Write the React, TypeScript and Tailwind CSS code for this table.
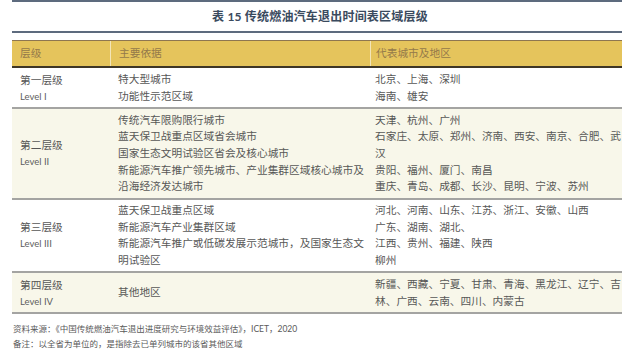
const rows = [
  {
    level: '第一层级',
    en: 'Level I',
    basis: ['特大型城市', '功能性示范区域'],
    cities: ['北京、上海、深圳', '海南、雄安'],
    bg: 'bg-white',
  },
  {
    level: '第二层级',
    en: 'Level II',
    basis: [
      '传统汽车限购限行城市',
      '蓝天保卫战重点区域省会城市',
      '国家生态文明试验区省会及核心城市',
      '新能源汽车推广领先城市、产业集群区域核心城市及',
      '沿海经济发达城市',
    ],
    cities: [
      '天津、杭州、广州',
      '石家庄、太原、郑州、济南、西安、南京、合肥、武',
      '汉',
      '贵阳、福州、厦门、南昌',
      '重庆、青岛、成都、长沙、昆明、宁波、苏州',
    ],
    bg: 'bg-[#f8f7ea]',
  },
  {
    level: '第三层级',
    en: 'Level III',
    basis: [
      '蓝天保卫战重点区域',
      '新能源汽车产业集群区域',
      '新能源汽车推广或低碳发展示范城市，及国家生态文',
      '明试验区',
    ],
    cities: ['河北、河南、山东、江苏、浙江、安徽、山西', '广东、湖南、湖北、', '江西、贵州、福建、陕西', '柳州'],
    bg: 'bg-white',
  },
  {
    level: '第四层级',
    en: 'Level IV',
    basis: ['其他地区'],
    cities: ['新疆、西藏、宁夏、甘肃、青海、黑龙江、辽宁、吉', '林、广西、云南、四川、内蒙古'],
    bg: 'bg-[#f8f7ea]',
  },
]

export default function App() {
  return (
    <main className="w-[624px] h-[355px] bg-white overflow-hidden pl-[12px] pr-[2px] font-['Noto_Sans_CJK_SC',sans-serif] text-[#575757]">
      {/* 标题 */}
      <div className="h-[2px] bg-[#5d6b7e]" />
      <div className="h-[29px] flex items-center justify-center pl-[6px]">
        <h1 className="text-[12px] font-bold text-[#3a4a5e] tracking-[0.2px] font-['Lato','Noto_Sans_CJK_SC',sans-serif]">
          表 15 传统燃油汽车退出时间表区域层级
        </h1>
      </div>
      <div className="h-[2px] bg-[#5d6b7e]" />

      {/* 表格 */}
      <div className="mt-[7px]">
        <div className="grid grid-cols-[98px_260px_1fr] h-[28px] bg-[#e5c45c] border-t border-[#8e7650] border-b-2 border-b-[#3e3626] text-[10.7px] text-[#94794a]">
          <div className="pl-2 flex items-center">层级</div>
          <div className="pl-2 flex items-center border-l border-[#f3e5b8]">主要依据</div>
          <div className="pl-[5px] flex items-center border-l border-[#f3e5b8]">代表城市及地区</div>
        </div>

        {rows.map(r => (
          <div key={r.level} className={`grid grid-cols-[98px_260px_1fr] py-[2.5px] border-b-2 border-[#a4a4a2] text-[10.7px] leading-[16.7px] ${r.bg}`}>
            <div className="pl-2 flex flex-col justify-center">
              <span className="leading-[17px]">{r.level}</span>
              <span className="leading-[17px] text-[9.5px] text-[#5e5e5e] font-['Lato',sans-serif]">{r.en}</span>
            </div>
            <div className="pl-2 flex flex-col justify-center whitespace-nowrap">
              {r.basis.map(b => (
                <span key={b}>{b}</span>
              ))}
            </div>
            <div className="pl-[5px] flex flex-col justify-center whitespace-nowrap">
              {r.cities.map(c => (
                <span key={c}>{c}</span>
              ))}
            </div>
          </div>
        ))}
      </div>

      {/* 注释 */}
      <div className="pt-[8px] pl-[1px] text-[8.5px] text-[#5a5a5a] leading-[15px] font-['Lato','Noto_Sans_CJK_SC',sans-serif]">
        <p>资料来源：《中国传统燃油汽车退出进度研究与环境效益评估》，ICET，2020</p>
        <p>备注：以全省为单位的，是指除去已单列城市的该省其他区域</p>
      </div>
    </main>
  )
}
